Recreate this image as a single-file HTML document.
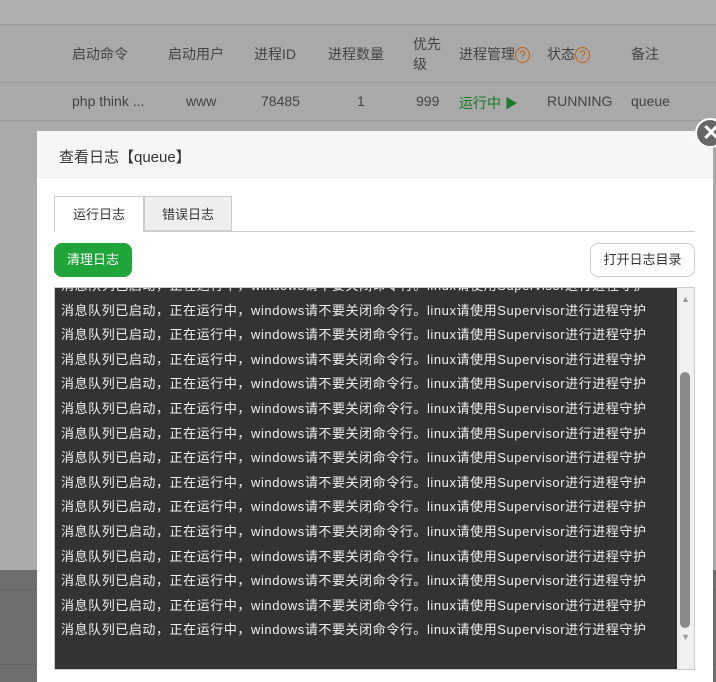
<!DOCTYPE html>
<html><head><meta charset="utf-8"><style>
*{margin:0;padding:0;box-sizing:border-box}
html,body{overflow:hidden}
body{width:716px;height:682px;position:relative;background:#a9a9a9;font-family:"Liberation Sans","Noto Sans CJK SC",sans-serif;font-size:14px;color:#333}
.abs{position:absolute}
.th{position:absolute;top:44px;color:#444;font-size:14px}
.td{position:absolute;top:93px;color:#444;font-size:14px}
.line{position:absolute;left:0;right:0;height:1px;background:#999}
.log{position:absolute;left:6px;color:#f0f0f0;font-size:13px;letter-spacing:0.57px;white-space:nowrap}
</style></head><body>
<div class="abs" style="left:0;top:0;width:716px;height:24px;background:#b0b0b0"></div>
<div class="line" style="top:24px"></div>
<div class="line" style="top:82px"></div>
<div class="line" style="top:120px"></div>
<div class="abs" style="left:0;top:570px;width:716px;height:112px;background:#6e6e6e"></div>
<div class="abs" style="left:0;top:589px;width:716px;height:1px;background:#646464"></div>
<div class="abs" style="left:0;top:664px;width:716px;height:1px;background:#646464"></div>
<div class="th" style="left:72px">启动命令</div>
<div class="th" style="left:168px">启动用户</div>
<div class="th" style="left:254px">进程ID</div>
<div class="th" style="left:328px">进程数量</div>
<div class="th" style="left:413px;top:34px;line-height:20px">优先<br>级</div>
<div class="th" style="left:459px">进程管理<span style="color:#c06010;border:1px solid #c06010;border-radius:50%;display:inline-block;width:15px;height:16px;font-size:12px;text-align:center;line-height:15px">?</span></div>
<div class="th" style="left:547px">状态<span style="color:#c06010;border:1px solid #c06010;border-radius:50%;display:inline-block;width:15px;height:16px;font-size:12px;text-align:center;line-height:15px">?</span></div>
<div class="th" style="left:631px">备注</div>
<div class="td" style="left:72px">php think ...</div>
<div class="td" style="left:186px">www</div>
<div class="td" style="left:261px">78485</div>
<div class="td" style="left:357px">1</div>
<div class="td" style="left:416px">999</div>
<div class="td" style="left:459px;color:#1a7a2a">运行中 <span style="font-size:13px">▶</span></div>
<div class="td" style="left:547px">RUNNING</div>
<div class="td" style="left:631px">queue</div>

<div class="abs" style="left:37px;top:131px;width:676px;height:551px;background:#fff">
 <div style="height:47px;background:#f6f6f6;border-bottom:1px solid #eee;padding:15px 0 0 22px;font-size:15px;color:#333">查看日志【queue】</div>
 <div class="abs" style="left:17px;top:100px;width:641px;height:1px;background:#ccc"></div>
 <div class="abs" style="left:17px;top:65px;width:90px;height:36px;background:#fff;border:1px solid #ccc;border-bottom:none;text-align:center;line-height:35px;font-size:13px">运行日志</div>
 <div class="abs" style="left:107px;top:65px;width:88px;height:35px;background:#eee;border:1px solid #ccc;text-align:center;line-height:35px;font-size:13px">错误日志</div>
 <div class="abs" style="left:17px;top:112px;width:78px;height:34px;background:#20a53a;border-radius:8px;color:#fff;text-align:center;line-height:34px;font-size:13px">清理日志</div>
 <div class="abs" style="left:553px;top:112px;width:105px;height:34px;border:1px solid #ccc;border-radius:8px;text-align:center;line-height:32px;font-size:13px">打开日志目录</div>
 <div class="abs" style="left:17px;top:156px;width:641px;height:383px;background:#333;border:1px solid #ccc;overflow:hidden">
  <div id="logs"></div>
  <div class="abs" style="right:0;top:0;width:17px;height:383px;background:#f0f0f0"></div>
  <div class="abs" style="right:4px;top:84px;width:10px;height:256px;background:#8a8a8a;border-radius:5px"></div>
  <div class="abs" style="right:4px;top:6px;color:#999;font-size:9px">▲</div>
  <div class="abs" style="right:4px;top:344px;color:#999;font-size:9px">▼</div>
 </div>
</div>
<div class="abs" style="left:695px;top:118px;width:30px;height:30px;border-radius:50%;background:#666;border:2px solid #fff;color:#fff;font-size:22px;line-height:25px;padding-left:5px;font-weight:bold">✕</div>
<script>
var h='';for(var i=0;i<15;i++){h+='<div class="log" style="top:'+(-13+i*24.6)+'px">消息队列已启动，正在运行中，windows请不要关闭命令行。linux请使用Supervisor进行进程守护</div>'}
document.getElementById('logs').innerHTML=h;
</script>
</body></html>
